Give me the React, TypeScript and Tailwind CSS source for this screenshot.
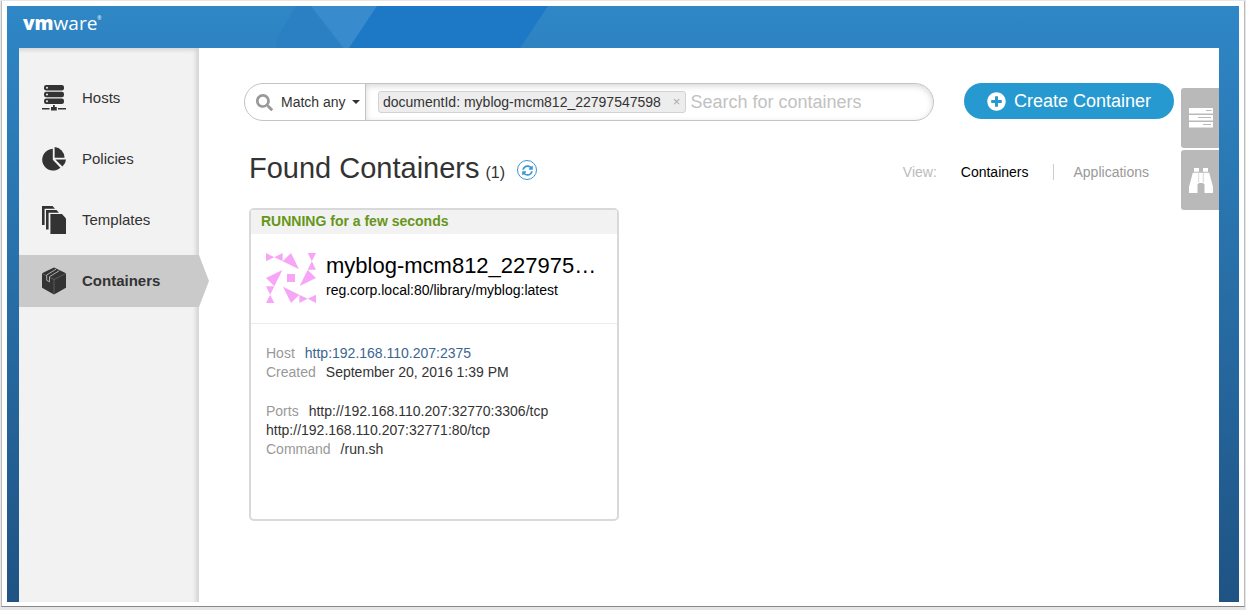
import React from 'react';
import { FaPlusCircle, FaSearch, FaSyncAlt } from 'react-icons/fa';
import { clsx } from 'clsx';

function HostsIcon() {
  return (
    <svg viewBox="0 0 24 26" className="w-6 h-[26px]" fill="#333">
      <rect x="2" y="0" width="20" height="5.4" rx="2.2" />
      <rect x="2" y="6.8" width="20" height="5.4" rx="2.2" />
      <rect x="2" y="13.6" width="20" height="5.4" rx="2.2" />
      <g fill="#f2f2f2">
        <circle cx="5" cy="2.7" r="1" />
        <circle cx="5" cy="9.5" r="1" />
        <circle cx="5" cy="16.3" r="1" />
      </g>
      <path d="M0 23h7.500v1.400H0zM16 23h8v1.400h-8zM11 20h1.800v2h2v3.500H9V22h2z" />
    </svg>
  );
}

function PoliciesIcon() {
  return (
    <svg viewBox="0 0 24 24" className="w-6 h-6" fill="#333">
      <path d="M10.8 1.8v11l7.6 8A10.9 10.9 0 1 1 10.8 1.8z" />
      <path d="M12.6 0a11 11 0 0 1 10 10.8h-10z" />
      <path d="M13.4 12.4H24a10.6 10.6 0 0 1-3.6 7.2z" />
    </svg>
  );
}

function TemplatesIcon() {
  return (
    <svg viewBox="0 0 24 28" className="w-6 h-7" fill="#333">
      <path d="M0 0h10.500l2.500 2.800H2.600V19H0z" />
      <path d="M4 4h10.500l2.500 2.800H6.600V23.500H4z" />
      <path d="M8.400 8h11.600l4 4.500V28H8.400z" />
    </svg>
  );
}

function ContainersIcon() {
  return (
    <svg viewBox="0 0 24 28" className="w-6 h-7">
      <path d="M12 0.500l11 5.200q1 0.500 1 1.500v13.600l-12 6.700L0 20.800V7.200q0-1 1-1.500z" fill="#333" />
      <path d="M1 7l11 5.500L23 7M12 12.500V27" fill="none" stroke="#777" strokeWidth="0.6" />
      <path d="M14 2.200L4.700 8v5.300l2.800 1.500V9.700l9.800-6" fill="#333" stroke="#bbb" strokeWidth="0.9" />
    </svg>
  );
}

function ServersIcon() {
  return (
    <svg viewBox="0 0 24 20" className="w-6 h-5" fill="#fff">
      <path d="M0 0h24v5.500H0zM0 7h24v5.500H0zM0 14h24v5.500H0z" />
      <path d="M17 2.500h5.500M9 9.500h13M14 16.500h8" stroke="#b9b9b9" strokeWidth="1" />
    </svg>
  );
}

function BinocularsIcon() {
  return (
    <svg viewBox="0 0 24 25" className="w-6 h-[25px]" fill="#fff">
      <path d="M5 0h5v3.800H5zM14 0h5v3.800h-5z" />
      <path d="M3.800 4.800h16.400L24 19v6h-8.500v-8.500L14 15h-4l-1.500 1.500V25H0v-6z" />
      <path d="M9.700 4.800v9.500M14.300 4.800v9.500" stroke="#ccc" strokeWidth="0.8" />
    </svg>
  );
}

function Identicon() {
  return (
    <svg viewBox="0 0 150 150" className="w-[50px] h-[50px] shrink-0" fill="#f7a6f7">
      {[0, 90, 180, 270].map((angle) => (
        <path
          key={angle}
          transform={`rotate(${angle} 75 75)`}
          d="M0 0l25 12.500L0 25zM50 0v25L25 12.500zM75 0l24 49-49-24z"
        />
      ))}
      <rect x="63" y="63" width="24" height="24" />
    </svg>
  );
}

const navItems = [
  { label: 'Hosts', icon: <HostsIcon /> },
  { label: 'Policies', icon: <PoliciesIcon /> },
  { label: 'Templates', icon: <TemplatesIcon /> },
  { label: 'Containers', icon: <ContainersIcon />, active: true },
];

function Header() {
  return (
    <header className="relative h-[42px] shrink-0 pl-4">
      <svg className="absolute left-[269px] top-0 w-[280px] h-[42px]" viewBox="0 0 280 42">
        <path d="M20 0h15l31 42H-5z" fill="#2a80c3" />
        <path d="M35 0h68L74 42h-6z" fill="#388bcc" />
        <path d="M101 0h171l-28 42H73z" fill="#1d78c5" />
      </svg>
      <a href="#" className="relative inline-flex items-start font-['Open_Sans',sans-serif] text-[19px] leading-[34px] text-white">
        <span className="font-extrabold">vm</span>
        <span>ware</span>
        <span className="text-[5px] leading-6">®</span>
      </a>
    </header>
  );
}

function Sidebar() {
  return (
    <nav className="w-[180px] shrink-0 bg-[#f2f2f2] pt-6 shadow-[inset_-3px_2px_4px_rgba(0,0,0,0.13)]">
      <ul className="flex flex-col gap-[9px]">
        {navItems.map((item) => (
          <li key={item.label} className="relative">
            <a
              href="#"
              className={clsx(
                'flex h-[52px] items-center gap-4 pl-[23px] text-[15px] text-[#333]',
                item.active && 'bg-[#cacaca] font-bold'
              )}
            >
              <span className="flex w-6 justify-center">{item.icon}</span>
              {item.label}
            </a>
            {item.active && (
              <span className="absolute left-full top-0 h-full w-[10px] bg-[#cacaca] [clip-path:polygon(0_0,100%_50%,0_100%)]" />
            )}
          </li>
        ))}
      </ul>
    </nav>
  );
}

function SearchBar() {
  return (
    <div className="flex h-[38px] min-w-0 flex-1 overflow-hidden rounded-full border border-[#c4c4c4]">
      <button className="flex w-[121px] shrink-0 items-center border-r border-[#c4c4c4] pl-[11px] text-sm text-[#333]">
        <FaSearch className="mr-2 size-[17px] text-[#999]" />
        Match any
        <span className="ml-[6px] border-x-4 border-t-4 border-x-transparent border-t-[#333]" />
      </button>
      <div className="flex min-w-0 flex-1 items-start gap-1 rounded-r-full pl-3 pt-[7px] shadow-[inset_0_2px_6px_rgba(0,0,0,0.16)]">
        <span className="flex h-[22px] shrink-0 items-center gap-3 rounded-[3px] border border-[#d2d2d2] bg-[#ededed] pr-[5px] pl-1 text-sm text-[#333]">
          documentId: myblog-mcm812_22797547598
          <button aria-label="Remove filter" className="text-[13px] text-[#aaa]">×</button>
        </span>
        <input
          aria-label="Search for containers"
          placeholder="Search for containers"
          className="h-[22px] min-w-0 flex-1 bg-transparent text-lg outline-none placeholder:text-[#c2c2c2]"
        />
      </div>
    </div>
  );
}

function ContainerCard() {
  return (
    <article className="mt-[21px] ml-[5px] min-h-[313px] w-[370px] rounded-[5px] border-2 border-[#d9d9d9] bg-white">
      <div className="h-6 bg-[#f2f2f2] pl-[10px] text-sm leading-[22px] font-bold text-[#669619]">
        RUNNING for a few seconds
      </div>
      <div className="flex h-[90px] gap-[10px] border-b border-[#ebebeb] px-[15px] pt-[19px] text-black">
        <Identicon />
        <div className="min-w-0">
          <h2 className="truncate text-[22px] leading-[26px]">myblog-mcm812_22797547598</h2>
          <p className="text-sm leading-[22px]">reg.corp.local:80/library/myblog:latest</p>
        </div>
      </div>
      <dl className="px-[15px] pt-5 text-sm leading-[19px] text-[#333] [&_dd]:inline [&_dt]:mr-[10px] [&_dt]:inline [&_dt]:text-[#999]">
        <div>
          <dt>Host</dt>
          <dd><a href="#" className="text-[#3d6591]">http:192.168.110.207:2375</a></dd>
        </div>
        <div>
          <dt>Created</dt>
          <dd>September 20, 2016 1:39 PM</dd>
        </div>
        <div className="mt-5">
          <dt>Ports</dt>
          <dd>http://192.168.110.207:32770:3306/tcp<br />http://192.168.110.207:32771:80/tcp</dd>
        </div>
        <div>
          <dt>Command</dt>
          <dd>/run.sh</dd>
        </div>
      </dl>
    </article>
  );
}

function SideTabs() {
  return (
    <div className="absolute right-0 top-10 flex flex-col gap-[2px]">
      <button aria-label="Resources" className="flex h-[60px] w-[38px] items-center rounded-l-[3px] bg-[#b9b9b9] pl-2">
        <ServersIcon />
      </button>
      <button aria-label="Requests" className="flex h-[60px] w-[38px] items-center rounded-l-[3px] bg-[#b9b9b9] pl-2">
        <BinocularsIcon />
      </button>
    </div>
  );
}

export default function App() {
  return (
    <div className="flex min-h-screen bg-[#e6e6e9] px-px pt-px pb-[3px] font-['Liberation_Sans',Arial,sans-serif]">
      <div className="flex min-w-0 flex-1 border border-t-0 border-[#bbb] border-b-[#888] bg-white px-[5px] pt-[5px] pb-1">
        <div className="flex min-w-0 flex-1 flex-col bg-linear-to-b from-[#2f87c6] to-[#1f5384]">
          <Header />
          <div className="mr-5 ml-3 flex flex-1 bg-white">
            <Sidebar />
            <main className="relative min-w-0 flex-1 px-[45px] pt-[35px]">
              <div className="flex items-start gap-[30px]">
                <SearchBar />
                <button className="flex h-9 w-[210px] shrink-0 items-center justify-center gap-2 rounded-full bg-[#2699d0] text-lg text-white">
                  <FaPlusCircle className="size-[19px]" />
                  Create Container
                </button>
              </div>
              <div className="mt-7 flex items-center pr-[25px] pl-[5px]">
                <div className="flex items-baseline gap-[6px] text-[#333]">
                  <h1 className="text-[29px] leading-[38px]">Found Containers</h1>
                  <span className="text-base">(1)</span>
                </div>
                <button
                  aria-label="Refresh"
                  className="mt-1 ml-3 flex size-5 items-center justify-center rounded-full border border-[#3c96d2] text-[#3c96d2]"
                >
                  <FaSyncAlt className="size-[11px]" />
                </button>
                <div className="mt-2 ml-auto flex items-center text-sm text-[#999]">
                  <span className="mr-6 text-[#bbb]">View:</span>
                  <a href="#" className="text-black">Containers</a>
                  <span className="mr-5 ml-6 h-4 w-px bg-[#ccc]" />
                  <a href="#">Applications</a>
                </div>
              </div>
              <ContainerCard />
              <SideTabs />
            </main>
          </div>
        </div>
      </div>
    </div>
  );
}
